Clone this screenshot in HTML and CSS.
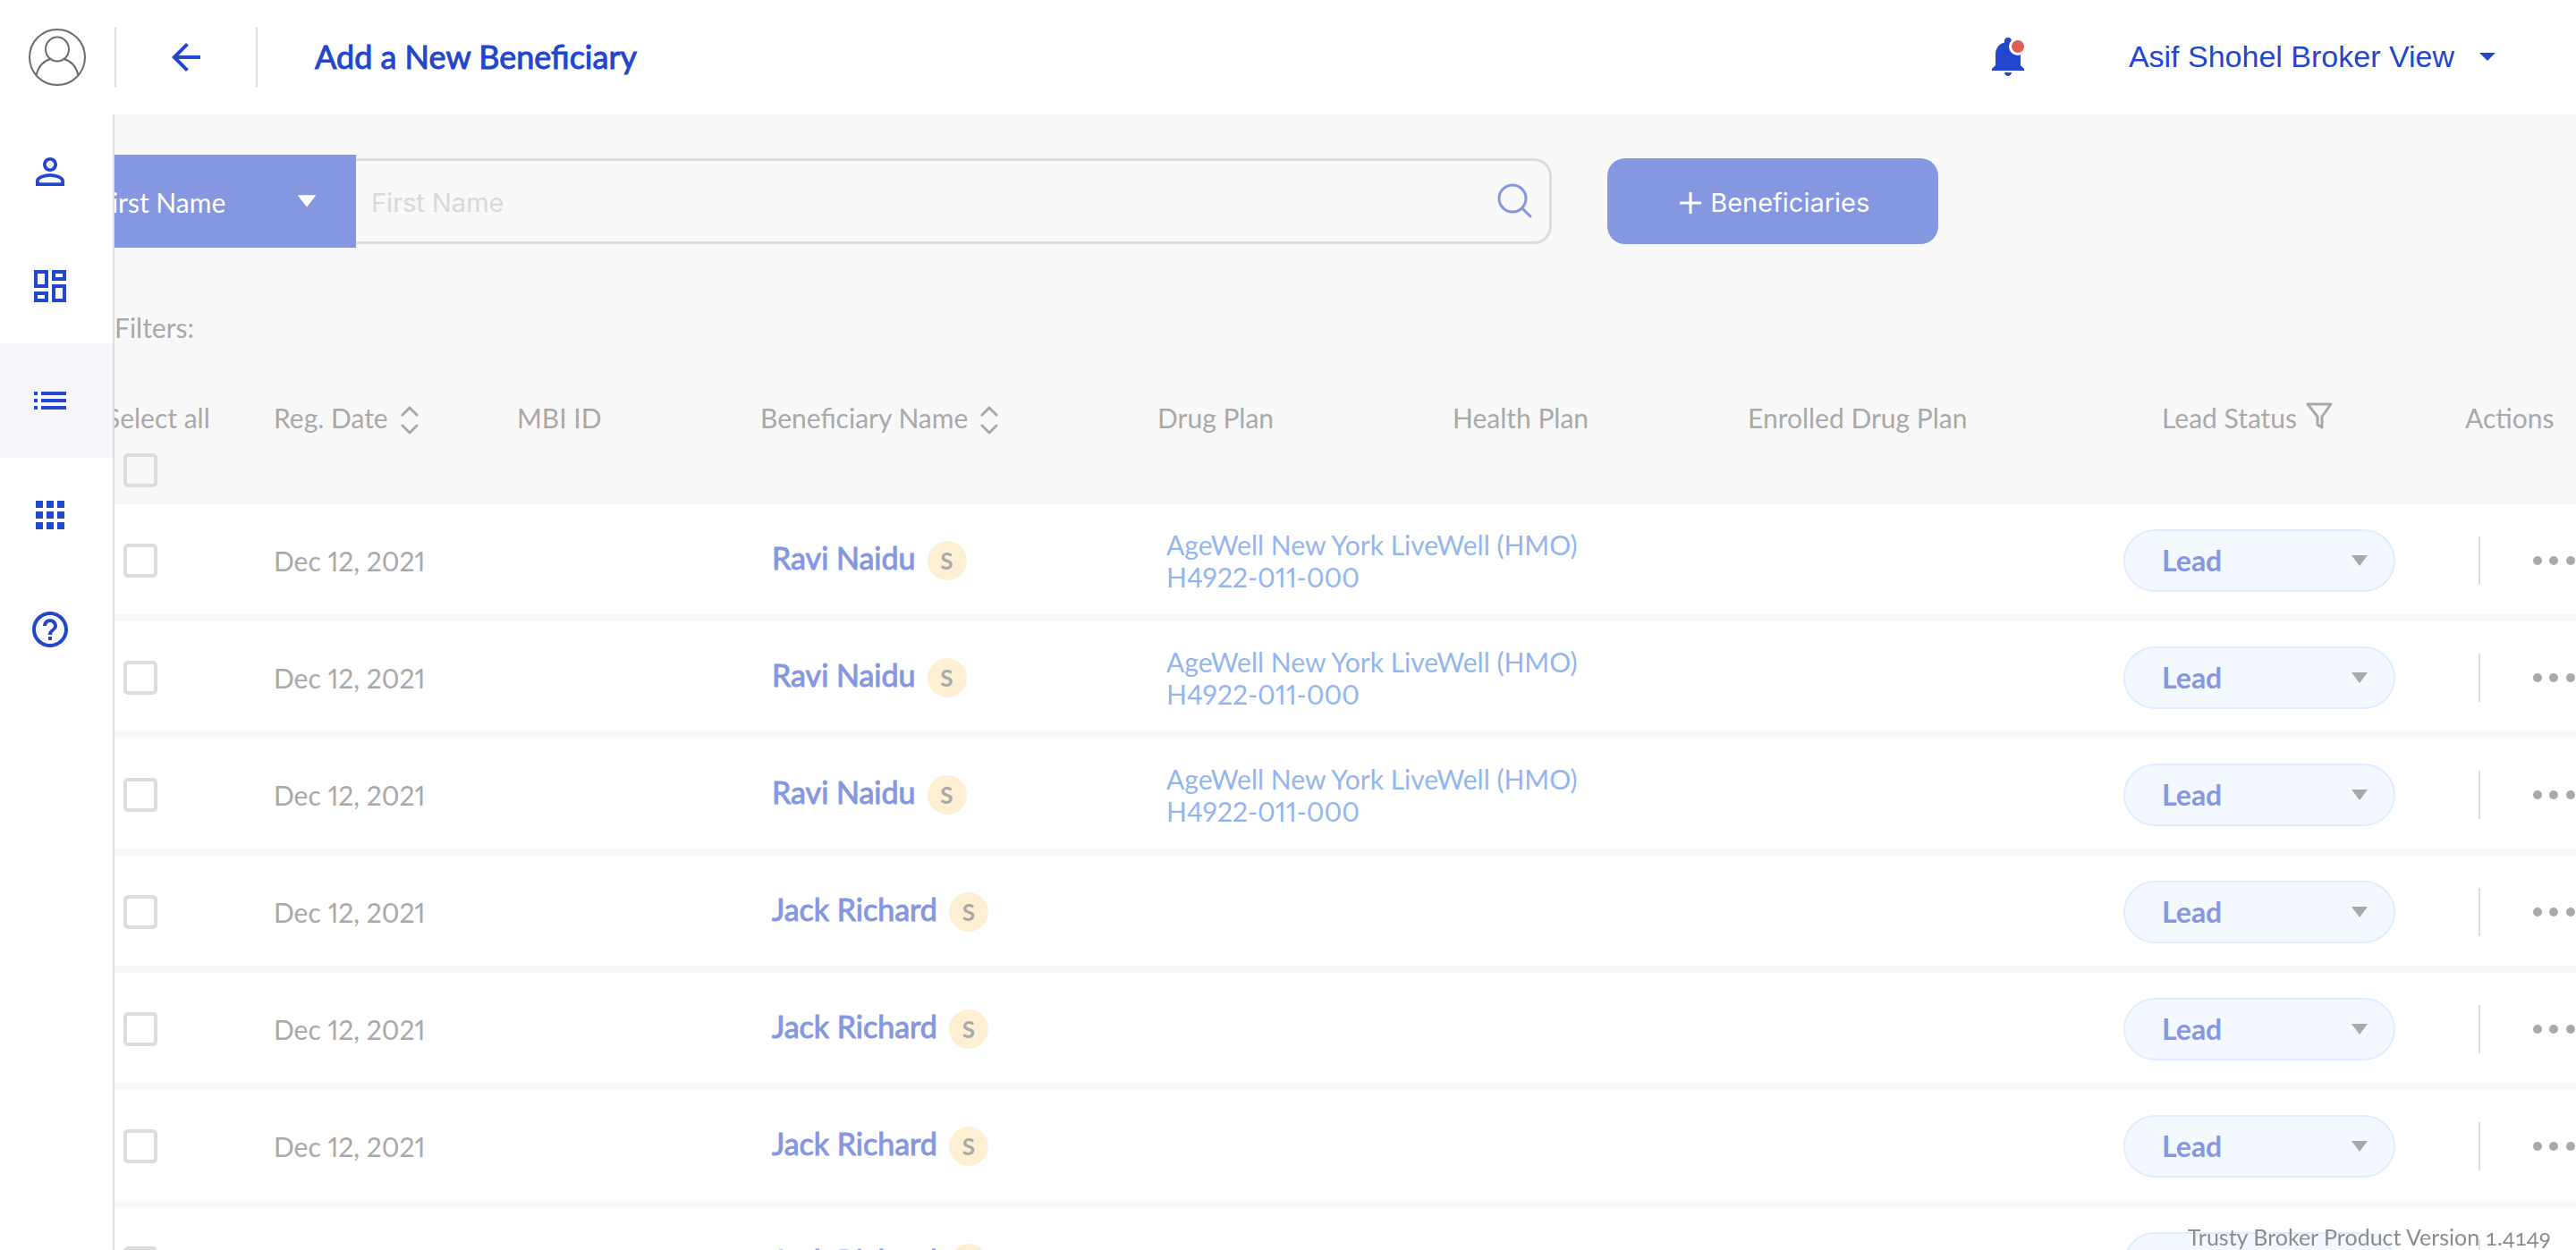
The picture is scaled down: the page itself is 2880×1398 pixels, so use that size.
FILE: index.html
```html
<!DOCTYPE html>
<html lang="en">
<head>
<meta charset="utf-8">
<title>Beneficiaries</title>
<link rel="stylesheet" href="styles.css">
</head>
<body>
<svg class="defs" aria-hidden="true">
  <symbol id="sort" viewBox="0 0 20 32"><path d="M2 10l8-8 8 8M2 22l8 8 8-8" fill="none" stroke="currentColor" stroke-width="3" stroke-linecap="round" stroke-linejoin="round"/></symbol>
  <symbol id="dots" viewBox="0 0 48 12"><circle cx="5" cy="6" r="5"/><circle cx="23" cy="6" r="5"/><circle cx="42" cy="6" r="5"/></symbol>
  <symbol id="caret" viewBox="0 0 20 14"><path d="M1 1h18l-9 12z"/></symbol>
</svg>

<header class="topbar">
  <a class="avatar" href="#" aria-label="Profile">
    <svg class="outline" viewBox="0 0 64 64" stroke="#6b6b6b" stroke-width="2"><circle cx="32" cy="32" r="31"/><ellipse cx="32" cy="23" rx="13" ry="13.500"/><path d="M8.500 52C11 42 17 36 24.500 34M39.500 34C47 36 53 42 55.500 52"/></svg>
  </a>
  <button class="back" type="button" aria-label="Back">
    <svg viewBox="0 0 24 24"><path d="M20 11H7.830l5.590-5.590L12 4l-8 8 8 8 1.410-1.410L7.830 13H20v-2z"/></svg>
  </button>
  <h1 class="title">Add a New Beneficiary</h1>
  <button class="bell" type="button" aria-label="Notifications">
    <svg viewBox="0 0 40 44"><path d="M19 43c2.300 0 4-1.800 4-4h-8c0 2.200 1.800 4 4 4zM33 31V19c0-7-4-12-10-13.500V4a4 4 0 0 0-8 0v1.500C9 7 5 12 5 19v12l-4 4v2h36v-2z"/><circle cx="30" cy="10" r="10" fill="#fff"/><circle cx="30" cy="10" r="7" fill="#e05c55"/></svg>
  </button>
  <button class="user" type="button">Asif Shohel Broker View <svg viewBox="0 0 20 10"><path d="M0 0h20L10 10z"/></svg></button>
</header>

<div class="shell">
  <nav class="sidebar" aria-label="Main">
    <a href="#" aria-label="Profile"><svg viewBox="0 0 24 24"><path d="M12 5.900a2.100 2.100 0 1 1 0 4.200 2.100 2.100 0 0 1 0-4.200m0 9c2.970 0 6.100 1.460 6.100 2.100v1.100H5.900V17c0-.64 3.130-2.100 6.100-2.100M12 4C9.790 4 8 5.790 8 8s1.790 4 4 4 4-1.790 4-4-1.790-4-4-4zm0 9c-2.670 0-8 1.340-8 4v3h16v-3c0-2.660-5.330-4-8-4z"/></svg></a>
    <a href="#" aria-label="Dashboard"><svg viewBox="0 0 24 24"><path d="M19 5v2h-4V5h4M9 5v6H5V5h4m10 8v6h-4v-6h4M9 17v2H5v-2h4M21 3h-8v6h8V3zM11 3H3v10h8V3zm10 8h-8v10h8V11zm-10 4H3v6h8v-6z"/></svg></a>
    <a class="active" href="#" aria-label="List"><svg viewBox="0 0 24 24"><path d="M3 13h2v-2H3v2zm0 4h2v-2H3v2zm0-8h2V7H3v2zm4 4h14v-2H7v2zm0 4h14v-2H7v2zM7 7v2h14V7H7z"/></svg></a>
    <a href="#" aria-label="Apps"><svg viewBox="0 0 24 24"><path d="M4 8h4V4H4v4zm6 12h4v-4h-4v4zm-6 0h4v-4H4v4zm0-6h4v-4H4v4zm6 0h4v-4h-4v4zm6-10v4h4V4h-4zm-6 4h4V4h-4v4zm6 6h4v-4h-4v4zm0 6h4v-4h-4v4z"/></svg></a>
    <a href="#" aria-label="Help"><svg viewBox="0 0 24 24"><path d="M11 18h2v-2h-2v2zm1-16C6.480 2 2 6.480 2 12s4.480 10 10 10 10-4.480 10-10S17.520 2 12 2zm0 18c-4.410 0-8-3.590-8-8s3.590-8 8-8 8 3.590 8 8-3.590 8-8 8zm0-14c-2.210 0-4 1.790-4 4h2c0-1.100.9-2 2-2s2 .9 2 2c0 2-3 1.750-3 5h2c0-2.250 3-2.500 3-5 0-2.210-1.790-4-4-4z"/></svg></a>
  </nav>

  <main class="content">
    <form class="toolbar">
      <div class="search">
        <div class="field">
          <select class="field-select" aria-label="Search by"><option>First Name</option></select>
          <svg class="field-caret"><use href="#caret"/></svg>
        </div>
        <div class="box">
          <input class="box-input" type="text" placeholder="First Name" aria-label="First Name">
          <button class="box-button" type="button" aria-label="Search"><svg class="outline" viewBox="0 0 40 40" stroke="currentColor" stroke-width="3" stroke-linecap="round"><circle cx="17" cy="17" r="15"/><path d="M28 28l9 9"/></svg></button>
        </div>
      </div>
      <button class="add" type="button"><svg viewBox="0 0 24 24"><path d="M12 1v22M1 12h22" stroke="currentColor" stroke-width="3" stroke-linecap="round"/></svg>Beneficiaries</button>
    </form>

    <p class="filters">Filters:</p>

    <table class="grid">
      <colgroup><col class="c-check"><col class="c-date"><col class="c-mbi"><col class="c-name"><col class="c-plan"><col class="c-plan"><col><col class="c-status"><col class="c-actions"></colgroup>
      <thead>
        <tr>
          <th><label class="select-all" for="all">Select all</label><input class="check" id="all" type="checkbox"></th>
          <th>Reg. Date<svg class="sort"><use href="#sort"/></svg></th>
          <th>MBI ID</th>
          <th>Beneficiary Name<svg class="sort"><use href="#sort"/></svg></th>
          <th>Drug Plan</th>
          <th>Health Plan</th>
          <th>Enrolled Drug Plan</th>
          <th class="status-head">Lead Status<svg class="funnel outline" viewBox="0 0 30 30" stroke="currentColor" stroke-width="3"><path d="M2 2h26L18 16v12l-5-3v-9z" stroke-linejoin="round"/></svg></th>
          <th>Actions</th>
        </tr>
      </thead>
      <tbody id="rows"></tbody>
    </table>
  </main>
</div>

<footer class="version">Trusty Broker Product Version 1.4149</footer>
<script src="rows.js"></script>
</body>
</html>
```
FILE: styles.css
```css
* { box-sizing: border-box; }

:root {
  --blue: #2246cc;
  --soft-blue: #8597e1;
  --grey: #a9a9a9;
  --line: #dcdcdc;
  --page: #f8f8f8;
}

body {
  display: flex;
  flex-direction: column;
  height: 100vh;
  margin: 0;
  overflow: hidden;
  background: #fff;
  color: var(--grey);
  font: 30px/36px Lato, "Liberation Sans", sans-serif;
  font-variant-numeric: proportional-nums;
}

button, input, select { font: inherit; color: inherit; margin: 0; }
button { padding: 0; border: 0; background: none; cursor: pointer; }
svg { display: block; fill: currentColor; }
.outline { fill: none; }
.defs { position: absolute; width: 0; height: 0; }

.topbar {
  flex: none;
  display: flex;
  align-items: center;
  height: 128px;
  padding: 0 90px 0 32px;
  color: var(--blue);
}
.avatar svg { width: 64px; height: 64px; }
.back {
  display: flex;
  align-items: center;
  justify-content: center;
  width: 160px;
  height: 68px;
  margin: 0 64px 0 32px;
  border: solid var(--line);
  border-width: 0 2px;
}
.back svg { width: 48px; height: 48px; }
.title {
  margin: 0;
  padding-bottom: 2px;
  font-size: 36px;
  line-height: 44px;
  font-weight: 400;
  -webkit-text-stroke: 1px currentColor;
}
.bell { margin-left: auto; }
.bell svg { width: 40px; height: 44px; }
.user {
  display: flex;
  align-items: center;
  gap: 28px;
  margin-left: 114px;
  padding-bottom: 2px;
  font: 34px/40px "Liberation Sans", Arial, sans-serif;
}
.user svg { width: 18px; height: 9px; }

.shell { flex: 1; display: flex; min-height: 0; }
.sidebar { flex: none; width: 128px; border-right: 2px solid var(--line); color: var(--blue); }
.sidebar a { display: flex; align-items: center; height: 128px; padding-left: 32px; color: inherit; }
.sidebar svg { width: 48px; height: 48px; }
.sidebar .active { background: #f6f7fd; }

.content { flex: 1; min-width: 0; overflow: hidden; background: var(--page); }

.toolbar { display: flex; align-items: center; margin: 45px 0 0 -40px; }
.search { display: flex; align-items: center; width: 59%; }
.field { display: flex; align-items: center; width: 310px; height: 104px; background: var(--soft-blue); color: #fff; }
.field-select {
  width: 100%;
  height: 100%;
  padding: 2px 0 0 20px;
  border: 0;
  background: none;
  appearance: none;
}
.field-caret { flex: none; width: 24px; height: 16px; margin: 0 43px 0 -67px; pointer-events: none; }
.box {
  flex: 1;
  display: flex;
  align-items: center;
  height: 96px;
  padding: 0 18px 0 17px;
  border: 3px solid var(--line);
  border-left: 0;
  border-radius: 0 20px 20px 0;
}
.box-input { flex: 1; min-width: 0; border: 0; padding: 3px 0 0; background: none; font-family: Inter, sans-serif; font-size: 29px; }
.box-input::placeholder { color: #d9d9d9; opacity: 1; }
.box-button { color: var(--soft-blue); }
.box-button svg { width: 40px; height: 40px; }
.add {
  display: flex;
  align-items: center;
  justify-content: center;
  gap: 10px;
  width: 370px;
  height: 96px;
  margin-left: 62px;
  padding: 3px 0 0 4px;
  border-radius: 20px;
  background: var(--soft-blue);
  color: #fff;
  font-family: Inter, sans-serif;
  font-size: 29px;
}
.add svg { width: 24px; height: 24px; }

.filters { margin: 71px 0 65px; }

.grid { width: 100%; table-layout: fixed; border-spacing: 0; white-space: nowrap; }
.c-check { width: 178px; }
.c-date { width: 272px; }
.c-mbi { width: 272px; }
.c-name { width: 444px; }
.c-plan { width: 330px; }
.c-status { width: 382px; }
.c-actions { width: 124px; }

th { height: 115px; padding: 0; text-align: left; vertical-align: top; font-weight: 400; }
th svg { display: inline-block; }
.select-all { display: block; margin-left: -10px; }
.sort { width: 20px; height: 32px; margin: -6px 0 -3px 14px; vertical-align: -4px; }
.status-head { padding-left: 43px; }
.funnel { width: 30px; height: 30px; margin-left: 10px; vertical-align: -1px; }
.check {
  appearance: none;
  display: block;
  width: 38px;
  height: 38px;
  margin-left: 10px;
  border: 4px solid var(--line);
  border-radius: 5px;
}
th .check { margin-top: 22px; }

td { height: 131px; padding: 2px 0 0; border-bottom: 8px solid var(--page); background: #fff; }
.person { display: flex; align-items: center; gap: 13px; padding: 1px 0 0 13px; }
.person a {
  padding-bottom: 7px;
  color: var(--soft-blue);
  font-size: 34px;
  line-height: 44px;
  text-decoration: none;
  -webkit-text-stroke: 1px currentColor;
}
.badge {
  width: 44px;
  height: 44px;
  border-radius: 50%;
  background: #fdf0d2;
  font-size: 26px;
  line-height: 44px;
  font-weight: 700;
  text-align: center;
}
.plan { display: block; width: 0; padding-left: 10px; color: #93b6ee; text-decoration: none; }
.lead {
  display: flex;
  align-items: center;
  width: 304px;
  height: 70px;
  border: 2px solid #deecff;
  border-radius: 35px;
  background: #f3f8ff;
}
.lead-select {
  width: 100%;
  height: 100%;
  padding: 0 0 0 41px;
  border: 0;
  background: none;
  appearance: none;
  color: var(--soft-blue);
  font-size: 32px;
  font-weight: 700;
}
.lead-caret { flex: none; width: 20px; height: 14px; margin: 0 28px 0 -48px; pointer-events: none; }
.actions { display: flex; align-items: center; padding-left: 15px; }
.more { height: 54px; padding-left: 59px; border-left: 2px solid var(--line); }
.more svg { width: 48px; height: 12px; }

.version {
  position: fixed;
  right: 28px;
  bottom: 1px;
  color: #8c8c8c;
  font-size: 25px;
  line-height: 28px;
  font-variant-numeric: oldstyle-nums;
}
```
FILE: rows.js
```js
const plan = 'AgeWell New York LiveWell (HMO)<br>H4922-011-000';
const people = [
  ['Ravi Naidu', plan], ['Ravi Naidu', plan], ['Ravi Naidu', plan],
  ['Jack Richard', ''], ['Jack Richard', ''], ['Jack Richard', ''], ['Jack Richard', '']
];

document.getElementById('rows').innerHTML = people.map(([name, drugPlan]) => `
  <tr>
    <td><input class="check" type="checkbox" aria-label="Select ${name}"></td>
    <td>Dec 12, 2021</td>
    <td></td>
    <td><div class="person"><a href="#">${name}</a><span class="badge">S</span></div></td>
    <td>${drugPlan && `<a class="plan" href="#">${drugPlan}</a>`}</td>
    <td></td>
    <td></td>
    <td><div class="lead"><select class="lead-select" aria-label="Lead status"><option>Lead</option></select><svg class="lead-caret"><use href="#caret"/></svg></div></td>
    <td><div class="actions"><button class="more" type="button" aria-label="More actions"><svg><use href="#dots"/></svg></button></div></td>
  </tr>`).join('');
```
